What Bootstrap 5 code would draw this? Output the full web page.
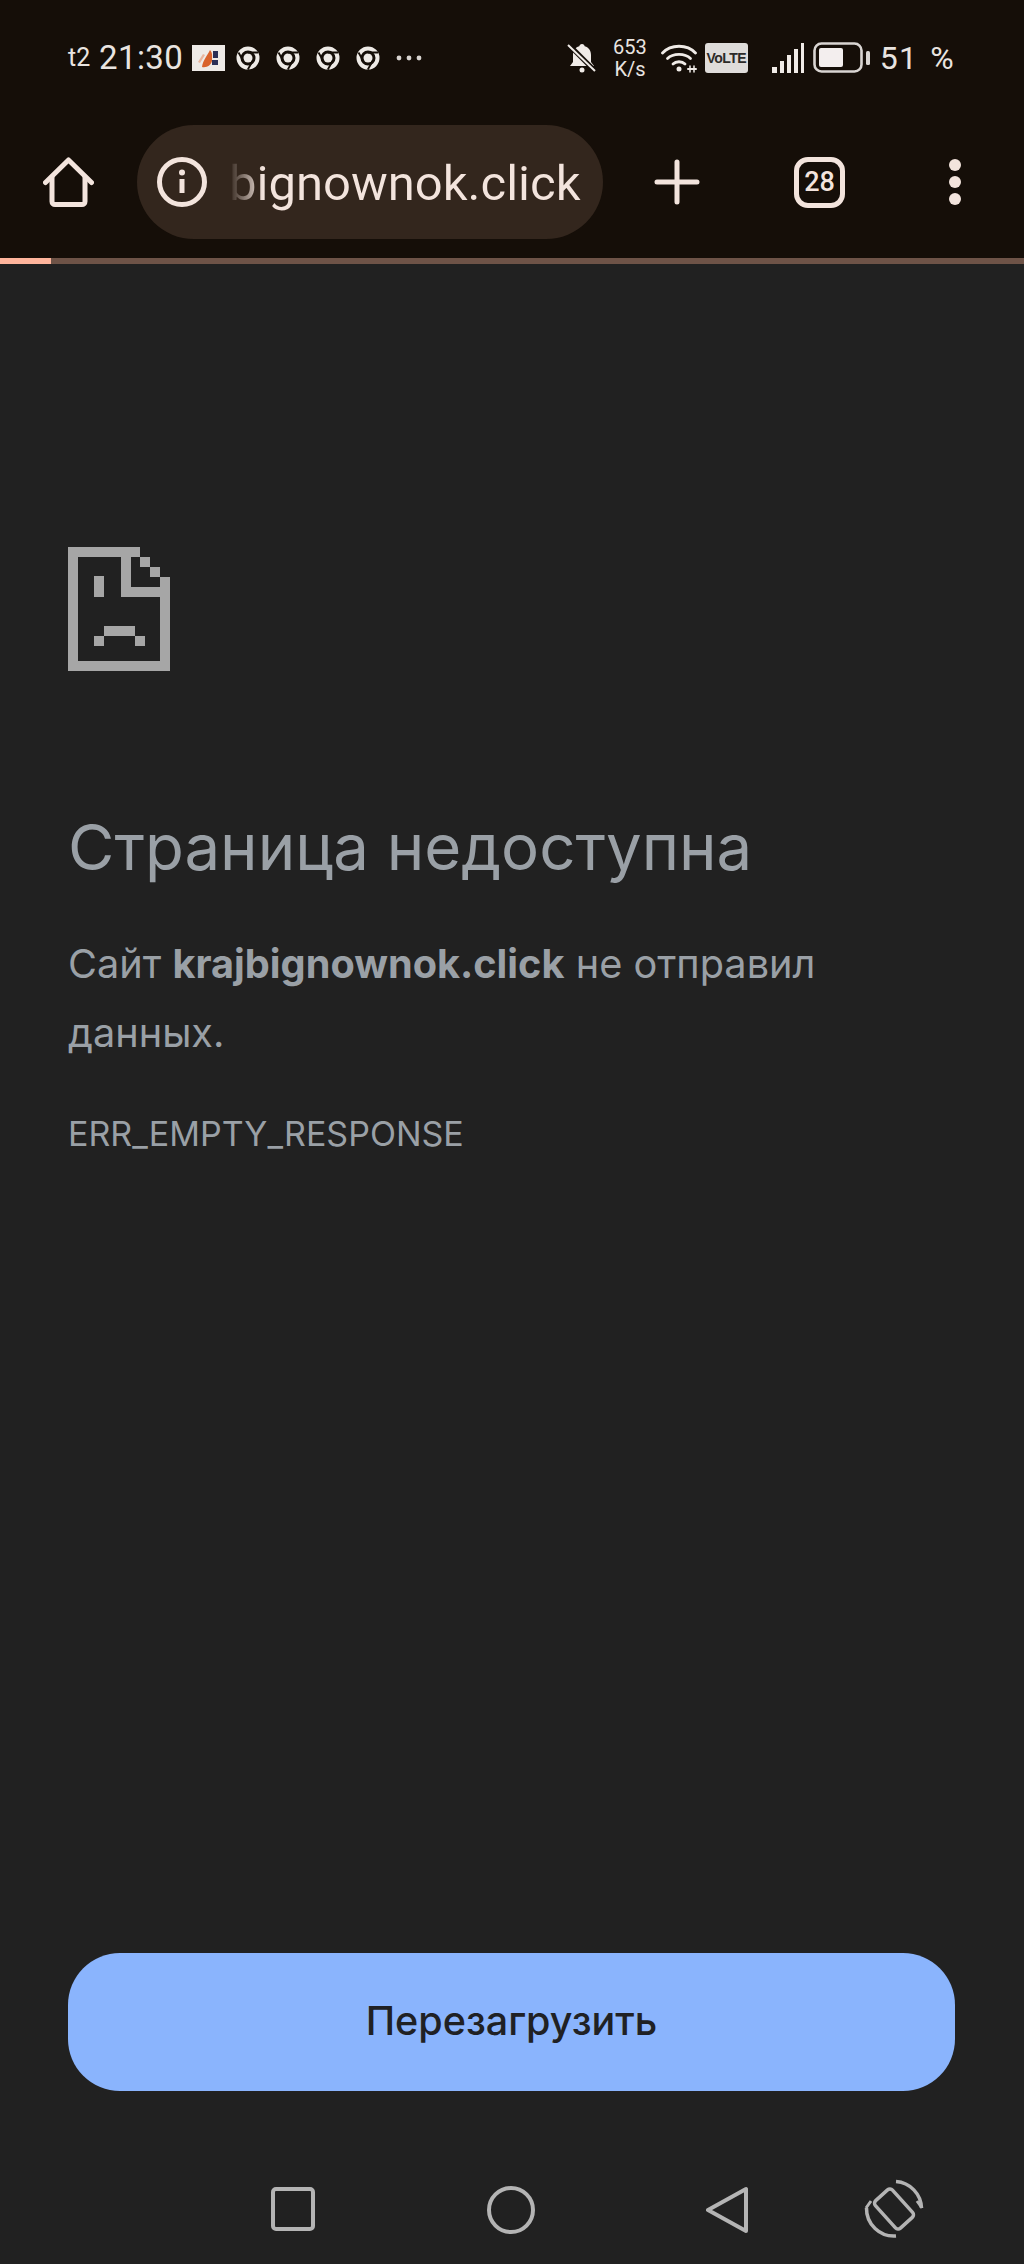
<!DOCTYPE html>
<html lang="ru">
<head>
  <meta charset="UTF-8">
  <title>Страница недоступна</title>
  <link href="https://cdn.jsdelivr.net/npm/bootstrap@5.3.0/dist/css/bootstrap.min.css" rel="stylesheet">
  <style>
    html, body { height: 2264px; }
    body { background-color: #212121; font-family: Roboto, "Liberation Sans", sans-serif; overflow: hidden; }
    .top-chrome { background-color: #150e08; color: #f3e4dd; }
    .status-row { height: 125px; padding: 36px 69px 0 68px; color: #e9e4e0; }
    .st-carrier { font-size: 25px; line-height: 44px; width: 31px; }
    .st-time { font-size: 33px; line-height: 44px; width: 93px; letter-spacing: .4px; }
    .st-percent { font-size: 32px; line-height: 44px; margin-left: 9px; letter-spacing: 1.2px; word-spacing: 3px; }
    .st-speed { font-size: 20px; line-height: 22px; margin: 0 14px 0 16px; text-align: center; }
    .st-volte { width: 43px; height: 30px; border-radius: 3px; background-color: #dfdcda; color: #2c2a28; font-family: "Liberation Sans Narrow", "Liberation Sans", sans-serif; font-size: 14px; font-weight: 700; letter-spacing: -.5px; line-height: 30px; text-align: center; white-space: nowrap; }
    .st-left svg, .st-right svg { display: block; flex: none; }
    .notif-gap { gap: 16px; margin-left: 11px; }
    .tool-row { height: 133px; padding: 0 0 19px 43px; }
    .url-pill { width: 466px; height: 114px; margin-left: 43px; padding-left: 20px; background-color: #33261d; border-radius: 57px; }
    .url-text { font-size: 49px; line-height: 68px; padding-top: 4px; margin-left: 22px; width: 353px; overflow: hidden; white-space: nowrap; color: #f3e4dd; background: linear-gradient(90deg, #33261d 0, #f3e4dd 34px); -webkit-background-clip: text; background-clip: text; -webkit-text-fill-color: transparent; }
    .btn-plus { margin-left: 51px; }
    .btn-tabs { margin-left: 94px; width: 51px; height: 51px; border: 5px solid #f3e4dd; border-radius: 14px; font-size: 27px; font-weight: 500; line-height: 41px; text-align: center; }
    .btn-more { margin-left: 104px; }
    .load-bar { height: 6px; border-radius: 0; background-color: #6e5347; }
    .load-bar .progress-bar { background-color: #ffb59c; }
    .error-body { padding: 283px 69px 0 68px; font-family: Inter, Roboto, sans-serif; color: #9aa0a6; }
    .error-body svg { display: block; }
    .err-title { font-size: 63.500px; line-height: 80px; font-weight: 400; margin: 136px 0 0; }
    .err-text { font-size: 39.700px; line-height: 69px; margin: 43px 0 0; }
    .err-text strong { font-weight: 700; }
    .err-code { font-size: 34px; line-height: 44px; margin: 44px 0 0; }
    .reload-btn { display: block; width: 887px; height: 138px; margin: 0 0 0 68px; padding-bottom: 6px; border: 0; border-radius: 52px; background-color: #8ab4fd; color: #202124; font-family: Inter, Roboto, sans-serif; font-size: 39.500px; font-weight: 500; }
    .reload-btn:hover { background-color: #8ab4fd; color: #202124; }
    .nav-row { height: 173px; padding-top: 96px; }
    .nav-row svg { display: block; flex: none; }
    .nav-square { margin-left: 271px; }
    .nav-circle { margin-left: 172px; margin-top: -1px; }
    .nav-back { margin-left: 171px; margin-top: -1px; }
    .nav-rotate { margin-left: 116px; margin-top: -8px; }
  </style>
</head>
<body class="d-flex flex-column">
  <header class="top-chrome">
    <div class="status-row d-flex justify-content-between align-items-start">
      <div class="st-left d-flex align-items-center">
        <span class="st-carrier">t2</span>
        <span class="st-time">21:30</span>
        <svg width="33" height="26" viewBox="0 0 33 26"><rect width="33" height="26" fill="#eeeae6"/><path d="M10 22 C11 15 15 11 18 5 C21 8 20 12 20 16 C19 20 15 23 10 22Z" fill="#d9622b"/><path d="M21 6h5v7h-5zM20 15h6v5h-6z" fill="#2b2f55"/><path d="M6 17l5-8 2 1-5 8z" fill="#e9b49c"/></svg>
        <div class="d-flex align-items-center notif-gap">
          <svg width="24" height="24" viewBox="0 0 24 24"><circle cx="12" cy="12" r="9.500" fill="none" stroke="#eeeae6" stroke-width="4"/><circle cx="12" cy="12" r="4.500" fill="#eeeae6"/><path d="M12 6.500h10M7.200 14.800L2.500 6.500M16.800 14.800L11.800 23.500" stroke="#150e08" stroke-width="1.800" fill="none"/></svg>
          <svg width="24" height="24" viewBox="0 0 24 24"><circle cx="12" cy="12" r="9.500" fill="none" stroke="#eeeae6" stroke-width="4"/><circle cx="12" cy="12" r="4.500" fill="#eeeae6"/><path d="M12 6.500h10M7.200 14.800L2.500 6.500M16.800 14.800L11.800 23.500" stroke="#150e08" stroke-width="1.800" fill="none"/></svg>
          <svg width="24" height="24" viewBox="0 0 24 24"><circle cx="12" cy="12" r="9.500" fill="none" stroke="#eeeae6" stroke-width="4"/><circle cx="12" cy="12" r="4.500" fill="#eeeae6"/><path d="M12 6.500h10M7.200 14.800L2.500 6.500M16.800 14.800L11.800 23.500" stroke="#150e08" stroke-width="1.800" fill="none"/></svg>
          <svg width="24" height="24" viewBox="0 0 24 24"><circle cx="12" cy="12" r="9.500" fill="none" stroke="#eeeae6" stroke-width="4"/><circle cx="12" cy="12" r="4.500" fill="#eeeae6"/><path d="M12 6.500h10M7.200 14.800L2.500 6.500M16.800 14.800L11.800 23.500" stroke="#150e08" stroke-width="1.800" fill="none"/></svg>
          <svg width="26" height="6" viewBox="0 0 26 6" fill="#d8d4d0"><circle cx="3" cy="3" r="2.400"/><circle cx="13" cy="3" r="2.400"/><circle cx="23" cy="3" r="2.400"/></svg>
        </div>
      </div>
      <div class="st-right d-flex align-items-center">
        <svg width="30" height="32" viewBox="0 0 30 32"><path d="M15 2c1.600 0 2.500 1 2.700 2.300C22 5.500 24 9 24 13v7l3 4H3l3-4v-7c0-4 2-7.500 6.300-8.700C12.500 3 13.400 2 15 2z" fill="#f0ebe7"/><circle cx="15" cy="28" r="2.500" fill="#f0ebe7"/><path d="M2 3l26 26" stroke="#150e08" stroke-width="5"/><path d="M1 3l27 26" stroke="#f0ebe7" stroke-width="2"/></svg>
        <div class="st-speed">653<br>K/s</div>
        <svg width="36" height="30" viewBox="0 0 36 30" fill="none" stroke="#f0ebe7" stroke-width="2.800" stroke-linecap="round"><path d="M1.500 10C10 1 26 1 34.500 10"/><path d="M6.500 15.500C12 10 24 10 29.500 15.500"/><path d="M12 21C15 18 21 18 24 21"/><circle cx="18" cy="26" r="2.500" fill="#f0ebe7" stroke="none"/><path d="M27 26h8" stroke-width="2"/><path d="M29 23v6M33 23v6" stroke-width="1.500"/></svg>
        <div class="st-volte ms-2">VoLTE</div>
        <svg class="ms-4" width="33" height="30" viewBox="0 0 33 30" fill="#f0ebe7"><rect x="0" y="24" width="5" height="6"/><rect x="8" y="18" width="4" height="12"/><rect x="15" y="12" width="4" height="18"/><rect x="22" y="6" width="4" height="24"/><rect x="29" y="0" width="3" height="30"/></svg>
        <svg class="ms-2" width="58" height="32" viewBox="0 0 58 32"><rect x="1.500" y="1.500" width="47" height="28" rx="7" fill="none" stroke="#d9d5d2" stroke-width="2.600"/><rect x="6" y="6" width="24" height="19" rx="2" fill="#f3eeee"/><rect x="53" y="9" width="4" height="14" rx="1.500" fill="#d9d5d2"/></svg>
        <span class="st-percent">51 %</span>
      </div>
    </div>
    <div class="tool-row d-flex align-items-center">
      <svg width="51" height="51" viewBox="0 0 51 51" fill="none" stroke="#f3e4dd" stroke-width="5" stroke-linejoin="round" stroke-linecap="round"><path d="M2.500 25.500L25.500 3l23 22.500"/><path d="M9 20v24.500a3 3 0 0 0 3 3h27a3 3 0 0 0 3-3V20"/></svg>
      <div class="url-pill d-flex align-items-center">
        <svg class="flex-shrink-0" width="50" height="50" viewBox="0 0 50 50" fill="none"><circle cx="25" cy="25" r="22.500" stroke="#f3e4dd" stroke-width="5"/><rect x="22.500" y="22" width="5" height="14" fill="#f3e4dd"/><circle cx="25" cy="15.500" r="3" fill="#f3e4dd"/></svg>
        <div class="url-text">bignownok.click</div>
      </div>
      <svg class="btn-plus" width="46" height="46" viewBox="0 0 46 46" stroke="#f3e4dd" stroke-width="5" stroke-linecap="round"><path d="M23 3v40M3 23h40"/></svg>
      <div class="btn-tabs">28</div>
      <svg class="btn-more" width="12" height="46" viewBox="0 0 12 46" fill="#f3e4dd"><circle cx="6" cy="6" r="6"/><circle cx="6" cy="23" r="6"/><circle cx="6" cy="40" r="6"/></svg>
    </div>
    <div class="progress load-bar">
      <div class="progress-bar" style="width: 5%"></div>
    </div>
  </header>

  <main class="error-body flex-grow-1">
    <svg width="102" height="124" viewBox="0 0 102 124" fill="#a6a6a6"><path fill-rule="evenodd" d="M0 0H72V10H63V40H92V30H102V124H0ZM10 10V114H92V50H53V10Z"/><path d="M72 10h10v10H72zM82 20h10v10H82zM26 29h10v21H26zM36 79h31v10H36zM26 89h10v10H26zM67 89h10v10H67z"/></svg>
    <h1 class="err-title">Страница недоступна</h1>
    <p class="err-text">Сайт <strong>krajbignownok.click</strong> не отправил данных.</p>
    <p class="err-code">ERR_EMPTY_RESPONSE</p>
  </main>

  <button type="button" class="btn reload-btn">Перезагрузить</button>

  <nav class="nav-row d-flex">
    <svg class="nav-square" width="44" height="44" viewBox="0 0 44 44" fill="none" stroke="#b4b4b4" stroke-width="4"><rect x="2" y="2" width="40" height="40" rx="3"/></svg>
    <svg class="nav-circle" width="48" height="48" viewBox="0 0 48 48" fill="none" stroke="#b4b4b4" stroke-width="4"><circle cx="24" cy="24" r="22"/></svg>
    <svg class="nav-back" width="42" height="48" viewBox="0 0 42 48" fill="none" stroke="#b4b4b4" stroke-width="4" stroke-linejoin="round"><path d="M40 3v42L2 24z"/></svg>
    <svg class="nav-rotate" width="60" height="60" viewBox="0 0 60 60" fill="none" stroke="#b4b4b4" stroke-width="3.500"><rect x="18.500" y="11.500" width="23" height="37" rx="3.500" transform="rotate(-42 30 30)"/><path d="M32 2.500A27.500 27.500 0 0 1 57.500 29"/><path d="M2.500 29A27.500 27.500 0 0 0 32 57"/><path d="M58 29l-5-7M2 29l5-7" stroke-width="3"/></svg>
  </nav>
</body>
</html>
